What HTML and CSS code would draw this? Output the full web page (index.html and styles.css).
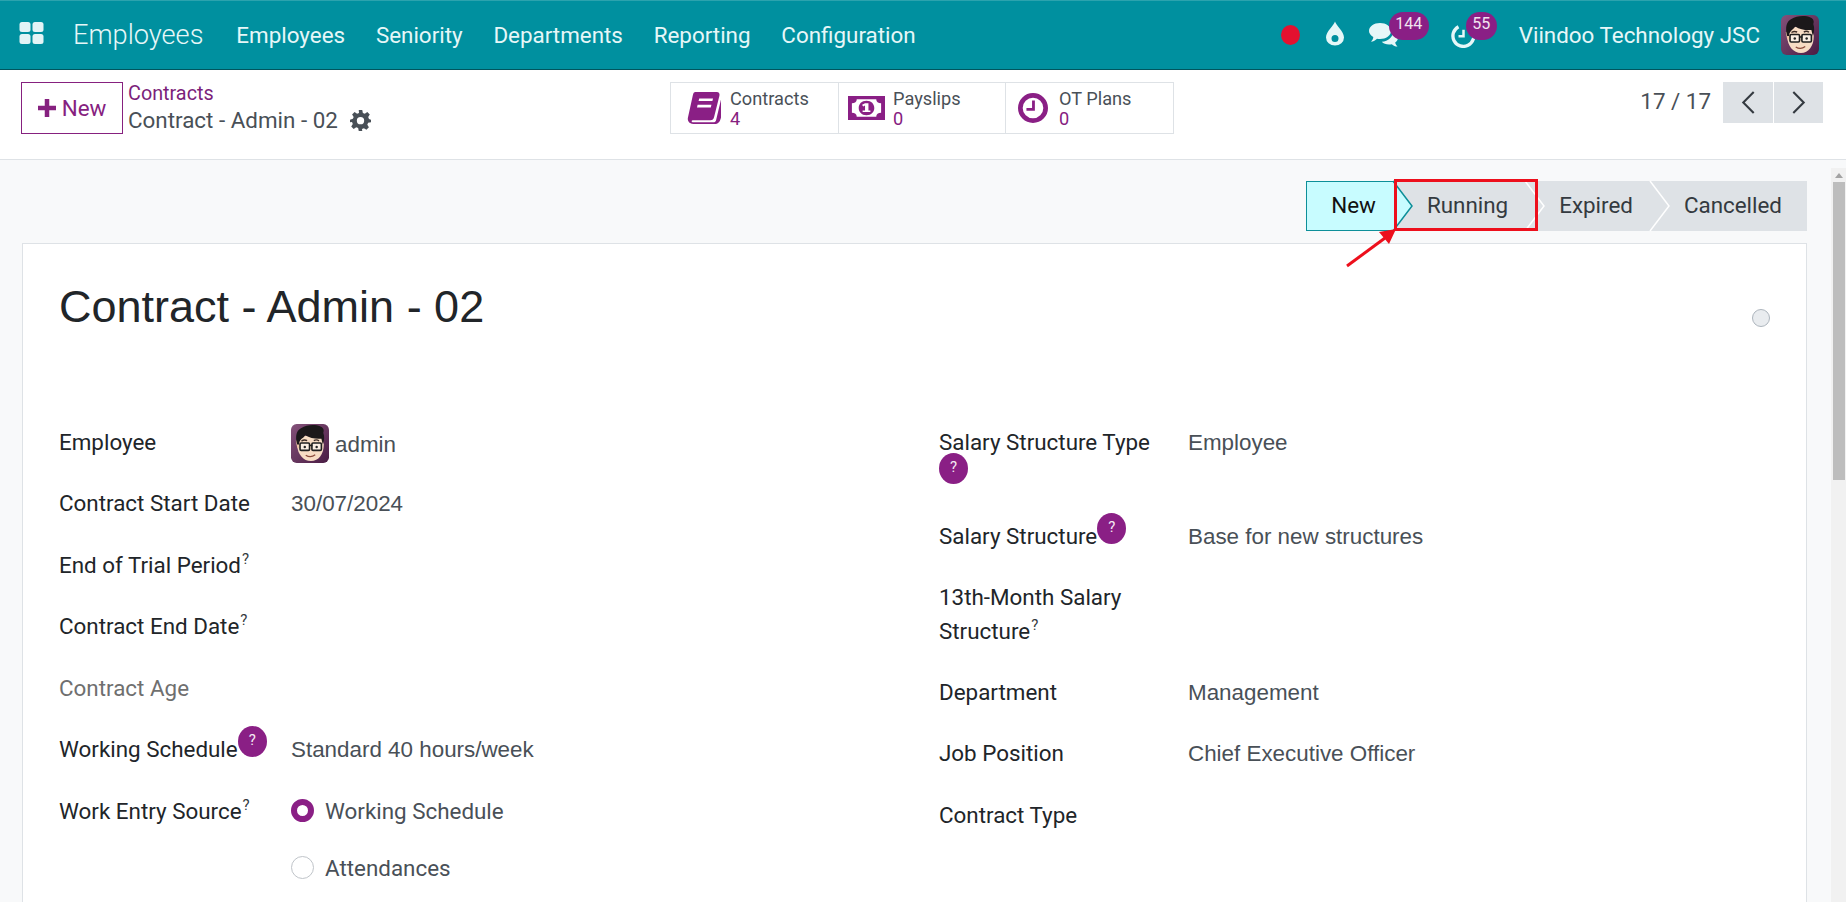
FILE: index.html
```html
<!DOCTYPE html>
<html lang="en">
<head>
<meta charset="utf-8">
<title>Contract - Admin - 02</title>
<link rel="stylesheet" href="styles.css">
</head>
<body>
<svg class="defs" width="0" height="0" aria-hidden="true">
  <defs><linearGradient id="bg" x1="0" y1="0" x2="1" y2="1"><stop offset="0" stop-color="#84527a"/><stop offset="1" stop-color="#4a1c44"/></linearGradient></defs>
  <symbol id="face" viewBox="0 0 40 40" preserveAspectRatio="none">
    <rect width="40" height="40" rx="6" fill="url(#bg)"/>
    <path d="M6.500 22C7 31 13 38 21 38c8 0 13.500-7 13.500-17l-2-9H9z" fill="#f7dcc4"/>
    <path d="M5 17l1.500 7c1 1 2 1 2.500.5L9.500 17z" fill="#eec5a4"/>
    <path d="M6.500 21C4 12 6 6 11 4c5-3 14-4 20-1.500 3.500 1.500 4 4 3 6.500 1.500 4 1 8-.5 12l-1.500-6c-6 .5-12-.5-17-3.500-1 2-3.500 3-4.500 4.500-1.500 1.500-2 3-2 5z" fill="#1b181a"/>
    <path d="M11 17.500c2-1.300 4-1.300 6-.5M24 17c2-1 4-.8 5.500.3" fill="none" stroke="#3a2a25" stroke-width="1.400"/>
    <rect x="9.500" y="19.500" width="10" height="7.500" rx="1.200" fill="#fff" fill-opacity=".55" stroke="#1f1f1f" stroke-width="1.700"/>
    <rect x="22" y="19.500" width="10" height="7.500" rx="1.200" fill="#fff" fill-opacity=".55" stroke="#1f1f1f" stroke-width="1.700"/>
    <path d="M19 22h3.500" stroke="#1f1f1f" stroke-width="1.500"/>
    <circle cx="14.500" cy="23.500" r="1.300" fill="#222"/><circle cx="27" cy="23.500" r="1.300" fill="#222"/>
    <path d="M15.500 32c3 1.800 7 1.800 10-.5" fill="none" stroke="#8a4a3a" stroke-width="1.300"/>
  </symbol>
</svg>
<nav class="navbar">
  <svg class="apps" viewBox="0 0 24 22"><rect x="0" y="0" width="11" height="10" rx="2.500"/><rect x="13" y="0" width="11" height="10" rx="2.500"/><rect x="0" y="12" width="11" height="10" rx="2.500"/><rect x="13" y="12" width="11" height="10" rx="2.500"/></svg>
  <span class="brand">Employees</span>
  <a class="menu">Employees</a>
  <a class="menu">Seniority</a>
  <a class="menu">Departments</a>
  <a class="menu">Reporting</a>
  <a class="menu">Configuration</a>
  <div class="systray">
    <span class="dot"></span>
    <svg class="drop" viewBox="0 0 18 24"><path fill-rule="evenodd" d="M9 0c1 4 9 10 9 16a9 8 0 0 1-18 0C0 10 8 4 9 0zM9 13.500a3.500 3.500 0 1 0 0 7 3.500 3.500 0 0 0 0-7z"/></svg>
    <span class="tray-icon chat">
      <svg viewBox="0 0 30 26"><path d="M11 0c6 0 11 3.500 11 8s-5 8-11 8c-1 0-2 0-3-.3-2 2-4 3-6 3 1.500-1.500 2.200-3 2.300-4.700C1.700 12.500 0 10.400 0 8c0-4.500 5-8 11-8z"/><path d="M24 8.500c3 1 5 3.300 5 6 0 2-1 3.700-2.800 5 .2 1.500 1 2.800 2.300 4-2.300 0-4-.8-5.700-2.300-1 .2-1.800.3-2.800.3-3 0-5.700-1-7.200-2.700 6.500-.3 11.200-4.800 11.200-10.300z"/></svg>
      <b class="badge wide">144</b>
    </span>
    <span class="tray-icon clock">
      <svg viewBox="0 0 30 30"><path fill="none" stroke="currentColor" stroke-width="4" d="M9 4.500A12.500 12.500 0 1 0 26 10"/><path fill="none" stroke="currentColor" stroke-width="3" d="M15 8v8h-6"/></svg>
      <b class="badge">55</b>
    </span>
    <span class="company">Viindoo Technology JSC</span>
    <svg class="avatar-nav"><use href="#face"/></svg>
  </div>
</nav>

<header class="panel">
  <button class="btn-new"><svg viewBox="0 0 16 16"><path d="M6 0h4v6h6v4h-6v6H6v-6H0V6h6z"/></svg>New</button>
  <div class="crumbs">
    <a class="crumb-link">Contracts</a>
    <div class="crumb-now">Contract - Admin - 02
      <svg class="gear" viewBox="0 0 24 24"><path fill-rule="evenodd" d="M10 0h4l.7 3.300 2.200.9L19.800 2.400l2.800 2.800-1.800 2.900.9 2.200L24 11v3l-3.300.7-.9 2.200 1.800 2.900-2.800 2.800-2.900-1.800-2.200.9L14 24h-4l-.7-3.300-2.200-.9-2.900 1.800-2.800-2.800 1.800-2.900-.9-2.200L0 14v-3l3.300-.9.900-2.200L2.400 5.200l2.800-2.800 2.900 1.800 2.200-.9zM12 8a4.200 4.200 0 1 0 0 8.400A4.200 4.200 0 0 0 12 8z"/></svg>
    </div>
  </div>
  <div class="stats">
    <div class="stat">
      <svg class="stat-icon book" viewBox="0 0 32 32"><path fill-rule="evenodd" d="M8 1h20c2 0 3 1.500 2.500 3.500l-5 20c-.5 2-1.500 3-3.500 3H5.500c-1.500 0-1.500 2 0 2H25c1 0 2-.6 2.300-1.700L32 8v17c-.5 2.500-2 6-5 6H6c-4 0-6-3-5-6.500L5.500 4C6 2 6.500 1 8 1zm3.500 6-.6 2.500h13l.6-2.500zm-1.500 6-.6 2.500h13l.6-2.500z"/></svg>
      <div class="stat-text"><span>Contracts</span><em>4</em></div>
    </div>
    <div class="stat">
      <svg class="stat-icon money" viewBox="0 0 38 30" preserveAspectRatio="none"><path fill-rule="evenodd" d="M0 0h38v30H0zM9 4c0 3-2 5-5 5v12c3 0 5 2 5 5h20c0-3 2-5 5-5V9c-3 0-5-2-5-5zm10 2c5 0 8 4 8 9s-3 9-8 9-8-4-8-9 3-9 8-9zm-1.500 3-3 2 1 2 2-1v6h-2.500v2h8v-2h-2V9z"/></svg>
      <div class="stat-text"><span>Payslips</span><em>0</em></div>
    </div>
    <div class="stat">
      <svg class="stat-icon clock-o" viewBox="0 0 32 32"><circle cx="16" cy="16" r="13.500" fill="none" stroke="currentColor" stroke-width="5"/><path d="M15 8h3v11h-9v-3h6z"/></svg>
      <div class="stat-text"><span>OT Plans</span><em>0</em></div>
    </div>
  </div>
  <div class="pager">
    <span class="pager-text">17 / 17</span>
    <button class="pager-btn"><svg viewBox="0 0 14 24"><path d="M12 2 2 12l10 10"/></svg></button>
    <button class="pager-btn"><svg viewBox="0 0 14 24"><path d="m2 2 10 10L2 22"/></svg></button>
  </div>
</header>

<div class="workspace">
  <main class="content">
    <div class="statusbar">
      <div class="step current">New<svg class="chev" viewBox="0 0 20 50"><path d="M0 0 19 25 0 50" fill="#c8fcff" stroke="#0d8f99" stroke-width="1.500"/></svg></div>
      <div class="step">Running<svg class="chev" viewBox="0 0 20 50"><path d="M0 0 19 25 0 50" fill="#dee2e6" stroke="#fff" stroke-width="1.500"/></svg></div>
      <div class="step">Expired<svg class="chev" viewBox="0 0 20 50"><path d="M0 0 19 25 0 50" fill="#dee2e6" stroke="#fff" stroke-width="1.500"/></svg></div>
      <div class="step last">Cancelled</div>
    </div>
    <section class="sheet">
      <div class="title-row">
        <h1 class="title">Contract - Admin - 02</h1>
        <span class="kanban-state"></span>
      </div>
      <div class="groups">
        <div class="group left">
          <div class="row"><label>Employee</label><div class="value employee"><svg class="avatar-form"><use href="#face"/></svg><span class="emp-name">admin</span></div></div>
          <div class="row"><label>Contract Start Date</label><div class="value">30/07/2024</div></div>
          <div class="row"><label>End of Trial Period<sup>?</sup></label><div class="value"></div></div>
          <div class="row"><label>Contract End Date<sup>?</sup></label><div class="value"></div></div>
          <div class="row"><label class="muted">Contract Age</label><div class="value"></div></div>
          <div class="row"><label>Working Schedule<i class="help">?</i></label><div class="value">Standard 40 hours/week</div></div>
          <div class="row"><label>Work Entry Source<sup>?</sup></label>
            <div class="value radios">
              <div class="radio on"><span class="mark"></span><span class="radio-label">Working Schedule</span></div>
              <div class="radio"><span class="mark"></span><span class="radio-label">Attendances</span></div>
            </div>
          </div>
        </div>
        <div class="group right">
          <div class="row two"><label>Salary Structure Type <i class="help low">?</i></label><div class="value">Employee</div></div>
          <div class="row"><label>Salary Structure<i class="help">?</i></label><div class="value">Base for new structures</div></div>
          <div class="row tall"><label>13th-Month Salary Structure<sup>?</sup></label><div class="value"></div></div>
          <div class="row"><label>Department</label><div class="value">Management</div></div>
          <div class="row"><label>Job Position</label><div class="value">Chief Executive Officer</div></div>
          <div class="row"><label>Contract Type</label><div class="value"></div></div>
        </div>
      </div>
    </section>
  </main>
  <aside class="scrollbar"><span class="up"></span><span class="thumb"></span></aside>
</div>

<svg class="annotation" viewBox="0 0 1846 902" aria-hidden="true">
  <rect x="1395.500" y="180.500" width="141" height="49" fill="none" stroke="#ed0f1c" stroke-width="3"/>
  <path d="M1347 266 1385 238" stroke="#ed0f1c" stroke-width="3" fill="none"/>
  <path d="M1396 229 1389 244 1379 232z" fill="#ed0f1c"/>
</svg>
</body>
</html>
```
FILE: styles.css
```css
* { box-sizing: border-box; }
html, body { margin: 0; height: 100%; }
body {
  width: 1846px; height: 902px; overflow: hidden; position: relative;
  display: flex; flex-direction: column;
  font-family: Roboto, "Liberation Sans", sans-serif;
  font-size: 22.4px; color: #212529; background: #f8f9fa;
}
.defs { position: absolute; }

.navbar {
  height: 70px; flex: none; display: flex; align-items: center;
  background: #00909f; border-top: 1px solid #2ba3ae; border-bottom: 1px solid #00555e;
  color: #e6f7f8; padding-left: 19px;
}
.apps { width: 25px; height: 22px; fill: #e3f4f6; margin: -4px 29px 0 0; }
.brand { font-size: 27.2px; font-weight: 300; margin-right: 17.500px; }
.menu { padding: 0 15.400px; font-weight: 400; }
.systray { margin-left: auto; display: flex; align-items: center; padding-right: 27px; }
.dot { width: 19px; height: 20px; border-radius: 50%; background: #e4112f; margin-right: 26px; }
.drop { width: 18px; height: 25px; fill: #e6f7f8; margin: -4px 25px 0 0; }
.tray-icon { position: relative; display: block; color: #e6f7f8; }
.tray-icon svg { display: block; fill: currentColor; }
.chat { width: 30px; height: 26px; margin-right: 52px; margin-top: 1px; }
.clock { width: 25px; height: 25px; margin-right: 43px; }
.badge {
  position: absolute; height: 28px; border-radius: 14px;
  background: #8a1f85; color: #f0e4ef; font-weight: 400; font-size: 16px; line-height: 24px; text-align: center;
  top: -11px; left: 15px; width: 31px;
}
.badge.wide { left: 20px; width: 40px; }
.company { font-weight: 400; color: #e6f7f8; margin-right: 21px; }
.avatar-nav { width: 38px; height: 40px; }

.panel {
  height: 90px; flex: none; background: #fff; border-bottom: 1px solid #dee2e6;
  padding: 12px 23px 0 21px; display: flex; align-items: flex-start; position: relative;
}
.btn-new {
  width: 102px; height: 52px; flex: none; background: #fff; border: 1px solid #86217f; color: #86217f;
  font: 400 22.400px Roboto, sans-serif; display: flex; align-items: center; justify-content: center; gap: 6px; padding: 0;
}
.btn-new svg { width: 18px; height: 18px; fill: #86217f; }
.crumbs { margin-left: 5px; width: 542px; flex: none; }
.crumb-link { display: block; color: #7c1f7b; font-size: 19.800px; line-height: 23px; }
.crumb-now { color: #495057; line-height: 30px; display: flex; align-items: center; white-space: nowrap; }
.gear { width: 21px; height: 21px; fill: #495057; margin-left: 12px; }
.stats { display: flex; height: 52px; border: 1px solid #dee2e6; flex: none; }
.stat { width: 168px; display: flex; align-items: center; border-right: 1px solid #dee2e6; color: #86217f; padding-left: 16px; }
.stat + .stat { width: 167px; }
.stat:last-child { border-right: 0; width: 167px; padding-left: 12px; }
.stat-icon { fill: #8a1f85; color: #8a1f85; flex: none; }
.stat-icon.book { width: 34px; height: 34px; margin-right: 9px; }
.stat-icon.money { width: 37px; height: 24px; margin: 0 8px 0 -7px; }
.stat-icon.clock-o { width: 30px; height: 30px; margin-right: 11px; }
.stat-text { display: flex; flex-direction: column; font-size: 18.200px; line-height: 20px; margin-top: 2px; }
.stat-text span { color: #495057; }
.stat-text em { font-style: normal; color: #86217f; }
.pager { margin-left: auto; display: flex; align-items: flex-start; height: 41px; }
.pager-text { color: #495057; margin-right: 11px; line-height: 38px; }
.pager-btn { width: 49px; height: 41px; margin-left: 1px; background: #dee2e6; border: 0; padding: 0; display: flex; align-items: center; justify-content: center; }
.pager-btn:first-of-type { width: 50px; }
.pager-btn svg { width: 15px; height: 25px; fill: none; stroke: #343a40; stroke-width: 2; }

.workspace { flex: 1; display: flex; min-height: 0; }
.content { flex: 1; min-width: 0; padding: 21px 24px 0 22px; overflow: hidden; }
.statusbar { display: flex; justify-content: flex-end; height: 50px; margin-bottom: 12px; }
.step {
  position: relative; background: #dee2e6; color: #343a40; height: 50px; line-height: 48px;
  padding: 0 18px 0 33px;
}
.step.current { background: #c8fcff; color: #111; border: 1px solid #0d8f99; border-right: 0; padding: 0 18px 0 24px; line-height: 46px; z-index: 3; }
.step.last { padding: 0 25px 0 33px; }
.chev { position: absolute; right: -19px; top: 0; width: 20px; height: 50px; z-index: 2; overflow: visible; }
.current .chev { top: -1px; }

.sheet { background: #fff; border: 1px solid #dee2e6; height: 800px; padding: 0 36px; }
.title-row { display: flex; justify-content: space-between; align-items: flex-start; height: 167.200px; }
.title { margin: 33px 0 0; font: 400 45px/60px "Liberation Sans", Arial, sans-serif; color: #212529; }
.kanban-state { width: 18px; height: 18px; margin-top: 65px; border-radius: 50%; background: #e9ecef; border: 1px solid #adb5bd; }
.groups { display: grid; grid-template-columns: 880px 1fr; }
.row { display: grid; min-height: 61.500px; padding-top: 13.700px; line-height: 34px; }
.left .row { grid-template-columns: 232px 1fr; }
.right .row { grid-template-columns: 249px 1fr; }
.row.two { min-height: 94px; }
.row.tall { min-height: 94.500px; }
.row label { display: block; padding-right: 20px; }
.row label.muted { color: #6f6f6f; }
.left label { white-space: nowrap; }
.value { color: #495057; font-family: "Liberation Sans", Arial, sans-serif; padding-top: 1px; }
.employee { display: flex; align-items: center; gap: 6px; height: 38px; padding-top: 0; }
.emp-name { padding-top: 2px; }
.avatar-form { width: 38px; height: 39px; flex: none; }
sup { font-size: 15px; line-height: 0; vertical-align: 9px; margin-left: 1px; color: #343a40; }
.help {
  display: inline-block; width: 29px; height: 31px; border-radius: 50%;
  background: #8a1f85; color: #f4e9f3; font: 400 15px/29px Roboto, sans-serif; text-align: center;
  vertical-align: 5px; transform: translateY(-7px);
}
.help.low { vertical-align: 0; display: block; margin-top: -6px; transform: none; }
.radios { font-family: Roboto, sans-serif; padding-top: 0; }
.radio { display: flex; align-items: center; gap: 11px; height: 34px; margin-bottom: 23px; }
.mark { width: 23px; height: 23px; border-radius: 50%; border: 1px solid #bfc4c9; background: #fff; flex: none; }
.radio.on .mark { border: 6.500px solid #8a1f85; }

.scrollbar { width: 15px; flex: none; background: #f1f1f1; margin-top: 8px; }
.up { display: block; width: 0; height: 0; margin: 5px auto 0; border: 4px solid transparent; border-top: 0; border-bottom: 5px solid #a3a3a3; }
.thumb { display: block; height: 298px; margin: 4px 1px 0 2px; background: #bdbdbd; }

.annotation { position: absolute; left: 0; top: 0; width: 1846px; height: 902px; pointer-events: none; z-index: 10; }
```
